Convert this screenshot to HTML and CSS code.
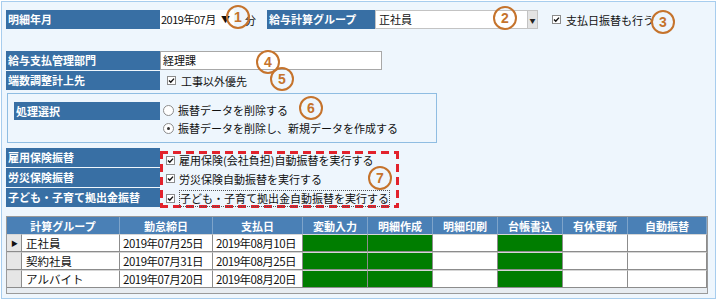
FILE: index.html
```html
<!DOCTYPE html>
<html lang="ja">
<head>
  <meta charset="UTF-8" />
  <title>給与計算</title>
  <link rel="stylesheet" href="styles.css">
</head>
<body>
  <div class="panel">
    <div class="row top">
      <div class="lbl">明細年月</div>
      <div class="combo date"><span class="num">2019年07月</span><span class="arrow">▼</span></div>
      <span class="unit">分</span>
      <div class="lbl grp">給与計算グループ</div>
      <div class="combo group">正社員</div>
      <div class="dropbtn">▼</div>
      <label class="chk pay"><svg class="cb" width="9" height="9" viewBox="0 0 9 9"><rect x="0.5" y="0.5" width="8" height="8" fill="#fff" stroke="#8c8c8c"/><path d="M2 4.4 L3.8 6.3 L7 2.6" fill="none" stroke="#111" stroke-width="1.4"/></svg>支払日振替も行う</label>
    </div>

    <div class="row dept-row">
      <div class="lbl">給与支払管理部門</div>
      <div class="textbox">経理課</div>
    </div>
    <div class="row">
      <div class="lbl">端数調整計上先</div>
      <label class="chk"><svg class="cb" width="9" height="9" viewBox="0 0 9 9"><rect x="0.5" y="0.5" width="8" height="8" fill="#fff" stroke="#8c8c8c"/><path d="M2 4.4 L3.8 6.3 L7 2.6" fill="none" stroke="#111" stroke-width="1.4"/></svg>工事以外優先</label>
    </div>

    <div class="box">
      <div class="lbl small">処理選択</div>
      <div class="radios">
        <label class="radio"><span class="rb"></span>振替データを削除する</label>
        <label class="radio"><span class="rb on"></span>振替データを削除し、新規データを作成する</label>
      </div>
    </div>

    <div class="ins">
      <div class="ins-labels">
        <div class="lbl">雇用保険振替</div>
        <div class="lbl">労災保険振替</div>
        <div class="lbl">子ども・子育て拠出金振替</div>
      </div>
      <div class="dashed">
        <label class="chk"><svg class="cb" width="9" height="9" viewBox="0 0 9 9"><rect x="0.5" y="0.5" width="8" height="8" fill="#fff" stroke="#8c8c8c"/><path d="M2 4.4 L3.8 6.3 L7 2.6" fill="none" stroke="#111" stroke-width="1.4"/></svg>雇用保険(会社負担)自動振替を実行する</label>
        <label class="chk"><svg class="cb" width="9" height="9" viewBox="0 0 9 9"><rect x="0.5" y="0.5" width="8" height="8" fill="#fff" stroke="#8c8c8c"/><path d="M2 4.4 L3.8 6.3 L7 2.6" fill="none" stroke="#111" stroke-width="1.4"/></svg>労災保険自動振替を実行する</label>
        <label class="chk"><svg class="cb" width="9" height="9" viewBox="0 0 9 9"><rect x="0.5" y="0.5" width="8" height="8" fill="#fff" stroke="#8c8c8c"/><path d="M2 4.4 L3.8 6.3 L7 2.6" fill="none" stroke="#111" stroke-width="1.4"/></svg><span class="focus">子ども・子育て拠出金自動振替を実行する</span></label>
      </div>
    </div>

    <div class="grid">
      <table>
        <colgroup>
          <col style="width:15px"><col style="width:98px"><col style="width:93px"><col style="width:90px">
          <col style="width:65px"><col style="width:65px"><col style="width:65px"><col style="width:65px">
          <col style="width:65px"><col>
        </colgroup>
        <thead>
          <tr>
            <th colspan="2">計算グループ</th><th>勤怠締日</th><th>支払日</th><th>変動入力</th>
            <th>明細作成</th><th>明細印刷</th><th>台帳書込</th><th>有休更新</th><th>自動振替</th>
          </tr>
        </thead>
        <tbody>
          <tr>
            <td class="ind">&#9654;</td><td>正社員</td><td class="num">2019年07月25日</td><td class="num">2019年08月10日</td>
            <td class="ok"></td><td class="ok"></td><td></td><td class="ok"></td><td></td><td></td>
          </tr>
          <tr>
            <td class="ind"></td><td>契約社員</td><td class="num">2019年07月31日</td><td class="num">2019年08月25日</td>
            <td class="ok"></td><td class="ok"></td><td></td><td class="ok"></td><td></td><td></td>
          </tr>
          <tr>
            <td class="ind"></td><td>アルバイト</td><td class="num">2019年07月20日</td><td class="num">2019年08月20日</td>
            <td class="ok"></td><td class="ok"></td><td></td><td class="ok"></td><td></td><td></td>
          </tr>
        </tbody>
      </table>
    </div>

    <span class="mark m1">1</span>
    <span class="mark m2">2</span>
    <span class="mark m3">3</span>
    <span class="mark m4">4</span>
    <span class="mark m5">5</span>
    <span class="mark m6">6</span>
    <span class="mark m7">7</span>
  </div>
</body>
</html>
```

FILE: styles.css
```css
* {
  box-sizing: border-box;
}
html, body {
  margin: 0;
  padding: 0;
  background: #fff;
  font-family: "Noto Sans CJK JP", "Liberation Sans", sans-serif;
  font-size: 11px;
  color: #111;
}
.panel {
  position: relative;
  margin: 1px 0 0 1px;
  width: 715px;
  height: 298px;
  padding: 8px 4px 0 4px;
  background: #eef6fd;
  border: 1px solid #a7cdee;
}
.row {
  display: flex;
  align-items: center;
  height: 19px;
}
.dept-row {
  margin-top: 22px;
}
.row + .row:not(.dept-row) {
  margin-top: 1px;
}
.lbl {
  width: 154px;
  height: 19px;
  line-height: 19px;
  padding-left: 2px;
  background: #386fa4;
  color: #fff;
  font-weight: bold;
  white-space: nowrap;
  flex-shrink: 0;
}
.lbl.grp {
  width: 108px;
}
.lbl.small {
  width: 146px;
  height: 18px;
  line-height: 18px;
  margin-top: 8px;
}
.combo {
  height: 19px;
  line-height: 19px;
  background: #fff;
  padding-left: 1px;
}
.combo.date {
  width: 74px;
  display: flex;
  justify-content: space-between;
  padding-right: 4px;
}
.num {
  letter-spacing: -0.5px;
}
.arrow {
  font-size: 9px;
}
.unit {
  margin-left: 11px;
  width: 22px;
}
.combo.group {
  width: 152px;
  border: 1px solid #c3c3c3;
  border-right: none;
  line-height: 17px;
  padding-left: 3px;
}
.dropbtn {
  width: 11px;
  height: 19px;
  line-height: 19px;
  background: #e3e3e3;
  border: 1px solid #c3c3c3;
  font-size: 6px;
  text-align: center;
  color: #222;
}
.chk {
  display: flex;
  align-items: center;
  gap: 5px;
  white-space: nowrap;
}
.chk.pay {
  margin-left: 7px;
}
.row .chk {
  padding-left: 7px;
}
.textbox {
  width: 222px;
  height: 19px;
  line-height: 17px;
  background: #fff;
  border: 1px solid #a8a8a8;
  padding-left: 2px;
}
.box {
  display: flex;
  width: 430px;
  height: 50px;
  margin: 3px 0 0 1px;
  border: 1px solid #8fbde2;
  padding-left: 6px;
}
.radios {
  display: flex;
  flex-direction: column;
  padding: 7px 0 0 3px;
}
.radio {
  display: flex;
  align-items: center;
  gap: 4px;
  height: 18px;
}
.rb {
  position: relative;
  width: 11px;
  height: 11px;
  border: 1px solid #8c8c8c;
  border-radius: 50%;
  background: #fff;
}
.rb.on::after {
  content: "";
  position: absolute;
  left: 3px;
  top: 3px;
  width: 3px;
  height: 3px;
  border-radius: 50%;
  background: #333;
}
.ins {
  display: flex;
  margin-top: 5px;
}
.ins-labels {
  display: flex;
  flex-direction: column;
  gap: 1px;
}
/* long red dashes, drawn as four gradient strips */
.dashed {
  width: 239px;
  height: 57px;
  margin-top: 3px;
  padding: 0 0 0 6px;
  display: flex;
  flex-direction: column;
  justify-content: space-around;
  background:
    repeating-linear-gradient(90deg, #e2222c 0 8px, transparent 8px 13px) left top / 100% 3px no-repeat,
    repeating-linear-gradient(90deg, #e2222c 0 8px, transparent 8px 13px) left bottom / 100% 3px no-repeat,
    repeating-linear-gradient(180deg, #e2222c 0 8px, transparent 8px 13px) left top / 3px 100% no-repeat,
    repeating-linear-gradient(180deg, #e2222c 0 8px, transparent 8px 13px) right top / 3px 100% no-repeat;
}
.dashed .chk {
  gap: 4px;
}
.focus {
  border: 1px dotted #555;
  padding: 0;
  line-height: 15px;
}
.grid {
  margin-top: 8px;
  width: 702px;
  height: 78px;
  border: 1px solid #9a9a9a;
  background: #e7ecf1;
}
table {
  width: 100%;
  border-collapse: separate;
  border-spacing: 0;
  table-layout: fixed;
}
th {
  height: 17px;
  background: #4a80b6;
  color: #fff;
  font-weight: bold;
  text-align: center;
  border-right: 1px solid #7ea4ca;
  padding: 0;
}
td {
  height: 18px;
  background: #fff;
  border-right: 1px solid #8c8c8c;
  border-bottom: 1px solid #8c8c8c;
  border-top: 1px solid #d6d6d6;
  padding: 0 0 0 4px;
  white-space: nowrap;
  font-size: 11.5px;
}
td.num {
  padding-left: 3px;
}
td.ind {
  background: #e6e6e6;
  font-size: 7px;
  padding-left: 4px;
}
td.ok {
  background: #007d00;
}
.mark {
  position: absolute;
  width: 24px;
  height: 24px;
  border: 2px solid #c5732c;
  border-radius: 50%;
  color: #c5732c;
  font-family: "Liberation Sans", sans-serif;
  font-weight: bold;
  font-size: 14px;
  line-height: 20px;
  text-align: center;
}
.m1 { left: 224px; top: 3px; }
.m2 { left: 491px; top: 4px; }
.m3 { left: 649px; top: 8px; }
.m4 { left: 254px; top: 48px; }
.m5 { left: 268px; top: 65px; }
.m6 { left: 297px; top: 94px; }
.m7 { left: 366px; top: 164px; }
```
